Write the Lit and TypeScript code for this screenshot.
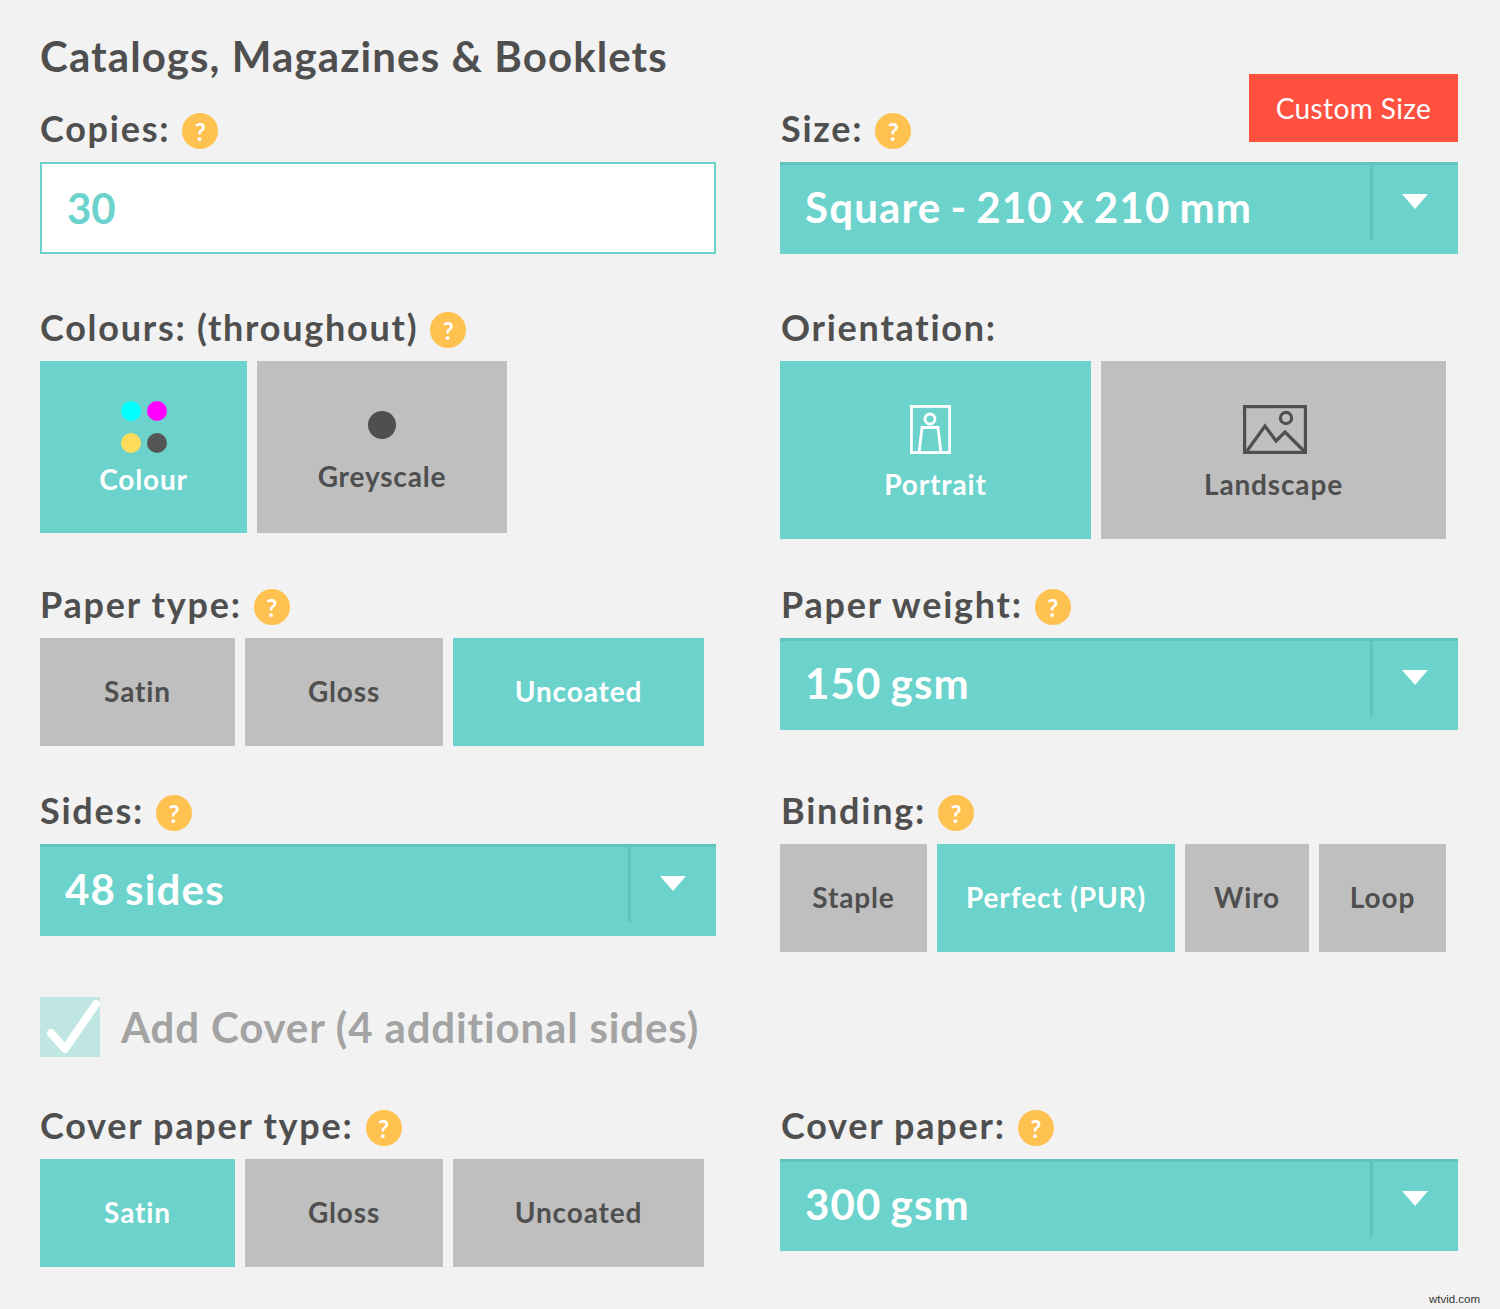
import { LitElement, html, css, svg } from "lit";
import { customElement } from "lit/decorators.js";

const help = html`<span class="help">?</span>`;

function label(text: string, withHelp = true) {
  return html`<div class="label"><span class="ltext">${text}</span>${withHelp ? help : ""}</div>`;
}
function select(text: string) {
  return html`<div class="select"><span class="value">${text}</span><span class="caret-cell"><span class="caret"></span></span></div>`;
}
function tiles(cols: string, items: [string, boolean][]) {
  return html`<div class="tiles ${cols}">
    ${items.map(([t, on]) => html`<div class="tile ${on ? "on" : ""}">${t}</div>`)}
  </div>`;
}

const portrait = svg`<svg class="ico portrait" width="41" height="49" viewBox="0 0 41 49" fill="none" stroke="#fff" stroke-width="2.8">
  <rect x="1.4" y="1.4" width="38.2" height="46.2"/>
  <circle cx="20" cy="14" r="5"/>
  <path d="M9 48 L12 22.5 H28 L31 48"/>
</svg>`;
const landscape = svg`<svg class="ico landscape" width="64" height="49" viewBox="0 0 64 49" fill="none" stroke="#4f4f4f" stroke-width="3.2">
  <rect x="1.6" y="1.6" width="60.8" height="45.8"/>
  <circle cx="43" cy="13" r="5.6"/>
  <path d="M4 46 L22 21 L33 36 L42 27 L61 46"/>
</svg>`;

@customElement("app-root")
export class AppRoot extends LitElement {
  static styles = css`
    :host {
      display: block;
      position: relative;
      box-sizing: border-box;
      min-height: 1309px;
      background: #f2f2f2;
      padding: 29px 42px 0 40px;
      font-family: Lato, "Open Sans", sans-serif;
      color: #4f4f4f;
    }
    h1 {
      margin: 0;
      height: 54px;
      line-height: 54px;
      font-size: 42px;
      font-weight: 700;
      letter-spacing: 1.1px;
      color: #4f4f4f;
    }
    .row {
      display: grid;
      grid-template-columns: 676px 678px;
      column-gap: 64px;
      align-items: start;
    }
    .r1 { margin-top: 26px; }
    .r2 { margin-top: 54px; }
    .r3 { margin-top: 46px; }
    .r4 { margin-top: 45px; }
    .r6 { margin-top: 49px; }
    .label {
      display: flex;
      align-items: center;
      gap: 12px;
      height: 40px;
      margin-bottom: 13px;
      font-size: 36px;
      font-weight: 700;
      letter-spacing: 1.75px;
      white-space: nowrap;
    }
    .ltext { margin-top: -2px; }
    .row > .field + .field .label { padding-left: 1px; }
    .field { position: relative; }
    .help {
      flex: none;
      width: 36px;
      height: 36px;
      margin-top: 4px;
      border-radius: 50%;
      background: #ffc14f;
      color: #fff;
      font-size: 24px;
      font-weight: 700;
      letter-spacing: 0;
      display: flex;
      align-items: center;
      justify-content: center;
    }
    .custom {
      position: absolute;
      right: 0;
      top: -35px;
      width: 209px;
      height: 68px;
      background: #ff5040;
      color: #fff;
      font-size: 28px;
      letter-spacing: 0.4px;
      display: flex;
      align-items: center;
      justify-content: center;
    }
    .input {
      box-sizing: border-box;
      height: 92px;
      background: #fff;
      border: 2px solid #6bd3cc;
      padding-left: 25px;
      display: flex;
      align-items: center;
      font-size: 42px;
      font-weight: 700;
      color: #6bd3cc;
    }
    .select {
      box-sizing: border-box;
      height: 92px;
      background: #6bd3cc;
      border-top: 3px solid #5fc4bd;
      color: #fff;
      display: flex;
      justify-content: space-between;
      font-size: 42px;
      font-weight: 700;
      letter-spacing: 1.2px;
      word-spacing: -2.5px;
    }
    .value {
      display: flex;
      align-items: center;
      padding-left: 25px;
      margin-top: -6px;
      white-space: nowrap;
    }
    .caret-cell {
      box-sizing: border-box;
      width: 88px;
      height: 75px;
      border-left: 3px solid #5fc4bd;
      position: relative;
    }
    .caret {
      position: absolute;
      left: 29px;
      top: 29px;
      width: 0;
      height: 0;
      border-left: 13px solid transparent;
      border-right: 13px solid transparent;
      border-top: 15px solid #fff;
    }
    .tiles { display: grid; column-gap: 10px; }
    .paper { grid-template-columns: 195px 198px 251px; }
    .bind { grid-template-columns: 147px 238px 124px 127px; }
    .colours { grid-template-columns: 207px 250px; }
    .orient { grid-template-columns: 311px 345px; }
    .tile {
      height: 108px;
      box-sizing: border-box;
      background: #bfbfbf;
      color: #4f4f4f;
      display: flex;
      flex-direction: column;
      align-items: center;
      justify-content: center;
      font-size: 28px;
      font-weight: 700;
      letter-spacing: 0.85px;
    }
    .paper .tile, .bind .tile { padding-bottom: 2px; }
    .tile.on { background: #6bd3cc; color: #fff; }
    .colours .tile { height: 172px; padding-top: 3px; }
    .colours .grey-tile { padding-top: 10px; }
    .orient .tile { height: 178px; gap: 13px; padding-top: 6px; }
    .ico { display: block; }
    .portrait { margin-right: 10px; }
    .landscape { margin-left: 3px; }
    .dots {
      display: grid;
      grid-template-columns: 20px 20px;
      gap: 12px 6px;
      margin-bottom: 9px;
    }
    .dot { width: 20px; height: 20px; border-radius: 50%; }
    .grey-dot {
      width: 28px;
      height: 28px;
      border-radius: 50%;
      background: #4f4f4f;
      margin: 0 0 20px;
    }
    .check {
      margin-top: 45px;
      display: flex;
      align-items: center;
      gap: 21px;
      height: 60px;
      font-size: 42px;
      font-weight: 700;
      letter-spacing: 0.85px;
      color: #a3a3a3;
      white-space: nowrap;
    }
    .box { flex: none; display: block; }
    .mark {
      position: absolute;
      right: 20px;
      bottom: 4px;
      font-size: 11.5px;
      color: #333;
      font-family: "Liberation Sans", sans-serif;
    }
  `;

  render() {
    return html`
      <h1>Catalogs, Magazines &amp; Booklets</h1>
      <div class="row r1">
        <div class="field">${label("Copies:")}<div class="input">30</div></div>
        <div class="field">
          <div class="custom">Custom Size</div>
          ${label("Size:")}${select("Square - 210 x 210 mm")}
        </div>
      </div>
      <div class="row r2">
        <div class="field">
          ${label("Colours: (throughout)")}
          <div class="tiles colours">
            <div class="tile on">
              <div class="dots">
                <span class="dot" style="background:#00ffff"></span>
                <span class="dot" style="background:#ff00ff"></span>
                <span class="dot" style="background:#ffdc5a"></span>
                <span class="dot" style="background:#555"></span>
              </div>
              Colour
            </div>
            <div class="tile grey-tile"><span class="grey-dot"></span>Greyscale</div>
          </div>
        </div>
        <div class="field">
          ${label("Orientation:", false)}
          <div class="tiles orient">
            <div class="tile on">${portrait}Portrait</div>
            <div class="tile">${landscape}Landscape</div>
          </div>
        </div>
      </div>
      <div class="row r3">
        <div class="field">
          ${label("Paper type:")}
          ${tiles("paper", [["Satin", false], ["Gloss", false], ["Uncoated", true]])}
        </div>
        <div class="field">${label("Paper weight:")}${select("150 gsm")}</div>
      </div>
      <div class="row r4">
        <div class="field">${label("Sides:")}${select("48 sides")}</div>
        <div class="field">
          ${label("Binding:")}
          ${tiles("bind", [["Staple", false], ["Perfect (PUR)", true], ["Wiro", false], ["Loop", false]])}
        </div>
      </div>
      <div class="check">
        <svg class="box" width="60" height="60" viewBox="0 0 60 60">
          <rect width="60" height="60" fill="#bfe6e3"/>
          <path d="M11 36 L25 52 L56 7" fill="none" stroke="#fff" stroke-width="8" stroke-linecap="round" stroke-linejoin="round"/>
        </svg>
        <span>Add Cover (4 additional sides)</span>
      </div>
      <div class="row r6">
        <div class="field">
          ${label("Cover paper type:")}
          ${tiles("paper", [["Satin", true], ["Gloss", false], ["Uncoated", false]])}
        </div>
        <div class="field">${label("Cover paper:")}${select("300 gsm")}</div>
      </div>
      <div class="mark">wtvid.com</div>
    `;
  }
}
